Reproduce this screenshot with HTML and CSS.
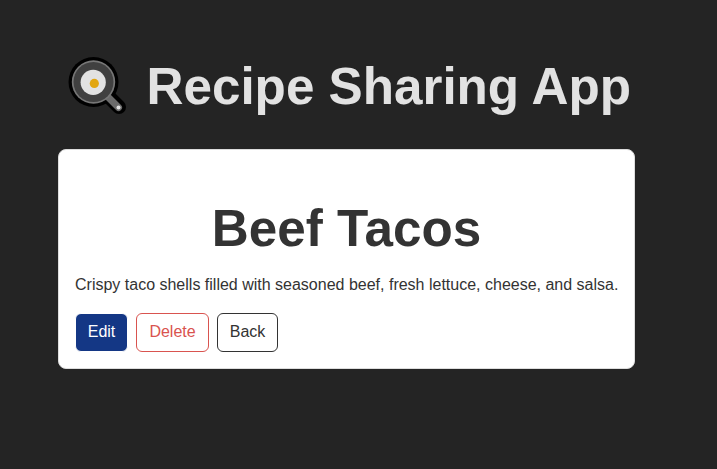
FILE: index.html
```html
<!DOCTYPE html>
<html lang="en">
<head>
<meta charset="utf-8">
<title>Recipe Sharing App</title>
<link rel="stylesheet" href="styles.css">
</head>
<body>
<main class="app">
  <h1 class="app-title">
    <svg class="pan" viewBox="0 0 60 60" aria-hidden="true">
      <path d="M42 42L51 51" stroke="#000" stroke-width="14" stroke-linecap="round"/>
      <circle cx="25.5" cy="26" r="25" fill="#000"/>
      <path d="M41 42L50.5 51.5" stroke="#6b6b6b" stroke-width="7" stroke-linecap="round"/>
      <circle cx="25.5" cy="26" r="21.7" fill="#777"/>
      <circle cx="25.5" cy="26" r="20" fill="#404040"/>
      <circle cx="25.2" cy="26.3" r="12.6" fill="#e2e2e2"/>
      <circle cx="26.3" cy="27.4" r="4.6" fill="#e2a610"/>
      <circle cx="50.5" cy="51.4" r="2" fill="#e2e2e2"/>
    </svg>
    <span>Recipe Sharing App</span>
  </h1>
  <section class="card">
    <h1 class="recipe-title">Beef Tacos</h1>
    <p class="description">Crispy taco shells filled with seasoned beef, fresh lettuce, cheese, and salsa.</p>
    <div class="actions">
      <button class="btn edit">Edit</button>
      <button class="btn delete">Delete</button>
      <button class="btn back">Back</button>
    </div>
  </section>
</main>
</body>
</html>
```
FILE: styles.css
```css
* { box-sizing: border-box; }
body {
  margin: 0;
  min-height: 100vh;
  background: #242424;
  color: #e2e2e2;
  font: 16px/24px "Liberation Sans", Arial, sans-serif;
}
.app {
  width: 577px;
  margin-left: 58px;
  padding-top: 58px;
}
.app-title,
.recipe-title {
  font-size: 51.2px;
  line-height: 56px;
  font-weight: 700;
}
.app-title {
  display: flex;
  height: 56px;
  margin: 0 0 35px 10px;
  white-space: nowrap;
}
.app-title span {
  padding-top: 1px;
}
.pan {
  flex: none;
  width: 60px;
  height: 60px;
  margin: -2px 18.5px -2px 0;
}
.card {
  height: 220px;
  padding: 16px;
  border: 1px solid #ddd;
  border-radius: 8px;
  background: #fff;
  color: #333;
}
.recipe-title {
  margin: 35px 0 16px;
  text-align: center;
}
.description {
  margin: 0 0 16px;
  white-space: nowrap;
}
.actions {
  display: flex;
  gap: 8px;
}
.btn {
  height: 39px;
  padding: 0 12px 2px;
  border: 1px solid;
  border-radius: 6px;
  background: #fff;
  font: inherit;
}
.edit {
  width: 53px;
  padding: 0 11px 2px;
  border-color: #fff;
  background: #143785;
  color: #fff;
}
.delete {
  width: 73px;
  border-color: #d9534f;
  color: #d9534f;
}
.back {
  width: 61px;
  padding: 0 11px 2px;
  border-color: #333;
  color: #333;
}
```
